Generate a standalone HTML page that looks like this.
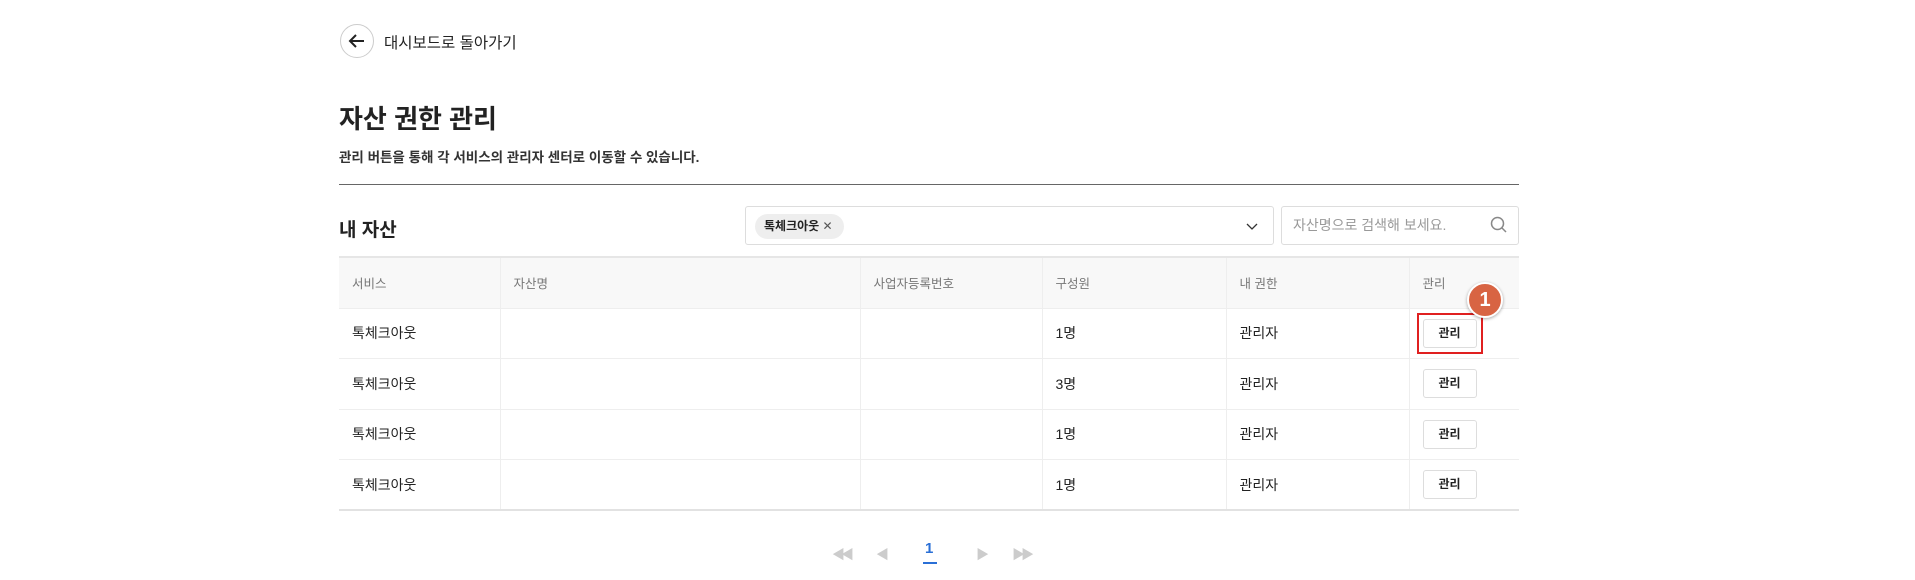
<!DOCTYPE html>
<html><head><meta charset="utf-8"><style>
body{margin:0;width:1915px;height:580px;background:#fff;font-family:"Liberation Sans","Noto Sans CJK KR",sans-serif;color:#222;position:relative;overflow:hidden}
.a{position:absolute}
.back{left:340px;top:24px;width:34px;height:34px;border:1px solid #ccc;border-radius:50%;box-sizing:border-box}
table{position:absolute;left:339px;top:256px;width:1180px;border-collapse:collapse;font-size:14px}
td,th{height:50.5px;border-left:1px solid #eee;border-bottom:1px solid #eee;padding:0 0 0 13px;text-align:left;box-sizing:border-box}
th{font-weight:normal;color:#777;font-size:12.5px;background:#f8f8f8;height:51px}
tr td:first-child,tr th:first-child{border-left:none}
table{border-top:2px solid #e6e6e6}
tr:last-child td{border-bottom:2px solid #e2e2e2}
.btn{display:inline-block;width:52px;height:27px;border:1px solid #ddd;border-radius:3px;font-size:12px;font-weight:bold;text-align:center;line-height:27px;margin-left:0;background:#fff}
</style></head><body>
<div class="a back"><svg width="32" height="32" viewBox="0 0 32 32"><path d="M23 16H10M15 10l-6 6 6 6" fill="none" stroke="#222" stroke-width="2"/></svg></div>
<div class="a" style="left:384px;top:31px;font-size:15.5px">대시보드로 돌아가기</div>
<div class="a" style="left:339px;top:99px;font-size:26px;font-weight:bold">자산 권한 관리</div>
<div class="a" style="left:339px;top:146px;font-size:13.5px;font-weight:bold;color:#333">관리 버튼을 통해 각 서비스의 관리자 센터로 이동할 수 있습니다.</div>
<div class="a" style="left:339px;top:184px;width:1180px;height:1px;background:#666"></div>
<div class="a" style="left:339px;top:215px;font-size:19px;font-weight:bold">내 자산</div>
<div class="a" style="left:745px;top:206px;width:529px;height:39px;border:1px solid #ddd;border-radius:3px;box-sizing:border-box"></div>
<div class="a" style="left:755px;top:214px;width:89px;height:25px;background:#eee;border-radius:13px;font-size:12px;font-weight:bold;line-height:25px;padding-left:9px;box-sizing:border-box">톡체크아웃 <span style="font-weight:normal;color:#555">✕</span></div>
<svg class="a" style="left:1245px;top:219px" width="14" height="14" viewBox="0 0 14 14"><path d="M2 5l5 5 5-5" fill="none" stroke="#333" stroke-width="1.3"/></svg>
<div class="a" style="left:1281px;top:206px;width:238px;height:39px;border:1px solid #ddd;border-radius:3px;box-sizing:border-box;font-size:14px;color:#999;line-height:37px;padding-left:11px">자산명으로 검색해 보세요.</div>
<svg class="a" style="left:1489px;top:215px" width="20" height="20" viewBox="0 0 20 20"><circle cx="8.5" cy="8.5" r="6" fill="none" stroke="#888" stroke-width="1.5"/><path d="M13 13l4 4" stroke="#888" stroke-width="1.5"/></svg>
<table>
<colgroup><col style="width:161px"><col style="width:360px"><col style="width:182px"><col style="width:184px"><col style="width:183px"><col></colgroup>
<tr><th>서비스</th><th>자산명</th><th>사업자등록번호</th><th>구성원</th><th>내 권한</th><th>관리</th></tr>
<tr><td>톡체크아웃</td><td></td><td></td><td>1명</td><td>관리자</td><td><span class="btn">관리</span></td></tr>
<tr><td>톡체크아웃</td><td></td><td></td><td>3명</td><td>관리자</td><td><span class="btn">관리</span></td></tr>
<tr><td>톡체크아웃</td><td></td><td></td><td>1명</td><td>관리자</td><td><span class="btn">관리</span></td></tr>
<tr><td>톡체크아웃</td><td></td><td></td><td>1명</td><td>관리자</td><td><span class="btn">관리</span></td></tr>
</table>
<div class="a" style="left:1417px;top:313px;width:66px;height:41px;border:2px solid #e02020;box-sizing:border-box"></div>
<div class="a" style="left:1467px;top:282px;width:36px;height:36px;border-radius:50%;background:#d86443;border:2px solid #fff;box-shadow:0 1px 3px rgba(0,0,0,.35);box-sizing:border-box;color:#fff;font-weight:bold;font-size:20px;text-align:center;line-height:32px">1</div>
<div class="a" style="left:832px;top:544px;font-size:13px;color:#ccc;letter-spacing:-4px">◀◀</div>
<div class="a" style="left:876px;top:544px;font-size:13px;color:#ccc">◀</div>
<div class="a" style="left:925px;top:540px;font-size:15px;color:#2a6fd6;font-weight:bold">1</div>
<div class="a" style="left:923px;top:562px;width:14px;height:2px;background:#2a6fd6"></div>
<div class="a" style="left:976px;top:544px;font-size:13px;color:#ccc">▶</div>
<div class="a" style="left:1012px;top:544px;font-size:13px;color:#ccc;letter-spacing:-4px">▶▶</div>
</body></html>
